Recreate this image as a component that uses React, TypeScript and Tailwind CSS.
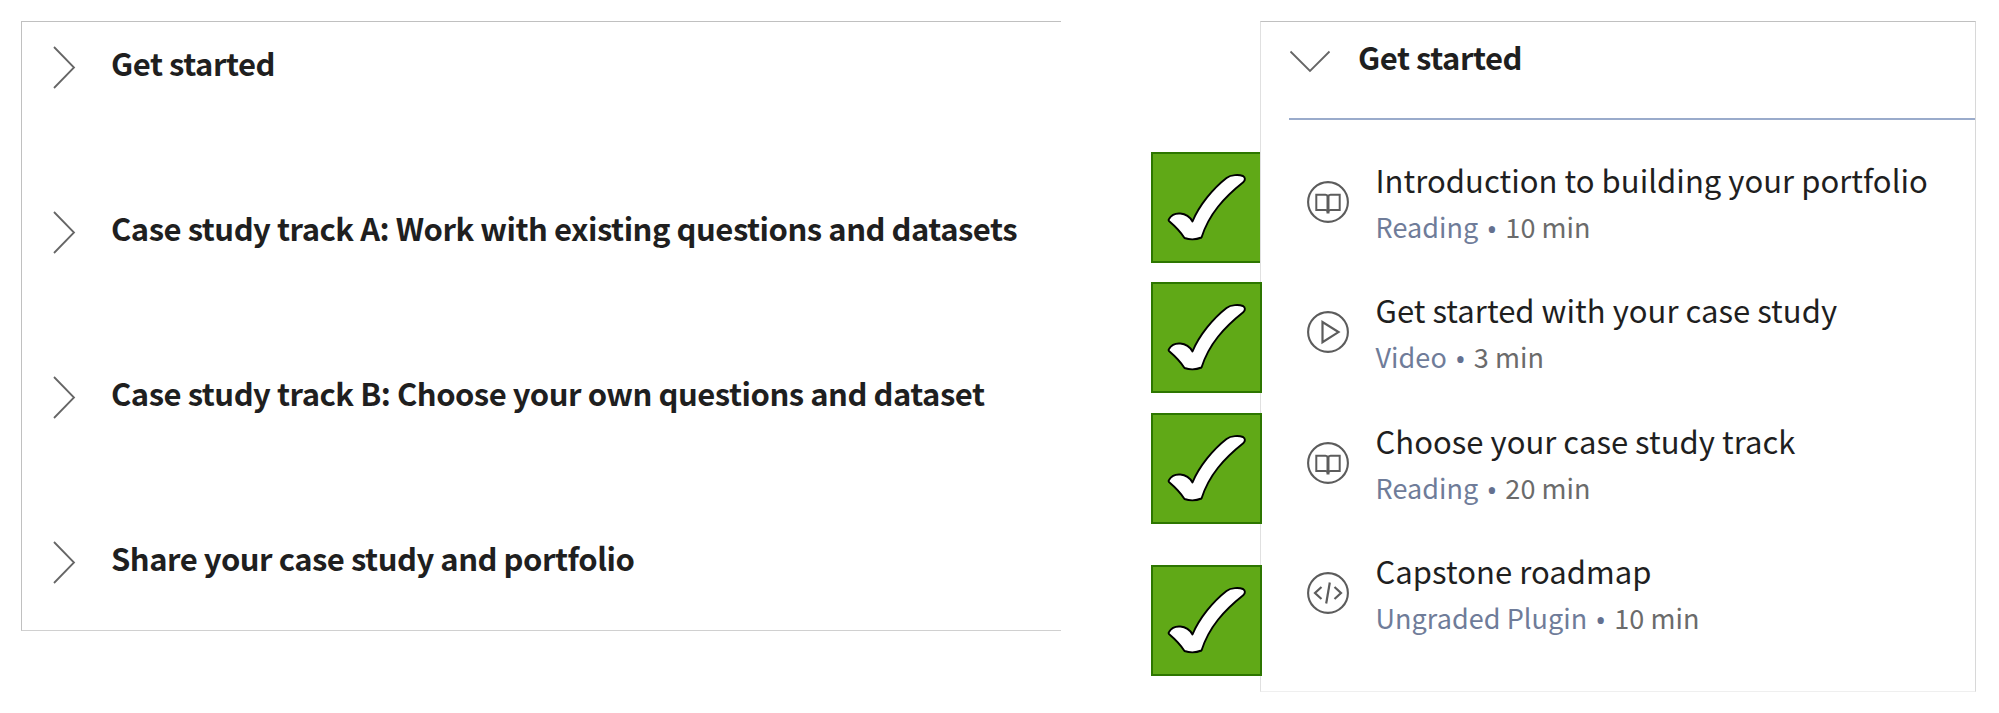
import type { ReactNode } from "react";

const modules = [
  "Get started",
  "Case study track A: Work with existing questions and datasets",
  "Case study track B: Choose your own questions and dataset",
  "Share your case study and portfolio",
];

type Kind = "reading" | "video" | "plugin";

const lessons: { title: string; kind: Kind; label: string; time: string }[] = [
  { title: "Introduction to building your portfolio", kind: "reading", label: "Reading", time: "10 min" },
  { title: "Get started with your case study", kind: "video", label: "Video", time: "3 min" },
  { title: "Choose your case study track", kind: "reading", label: "Reading", time: "20 min" },
  { title: "Capstone roadmap", kind: "plugin", label: "Ungraded Plugin", time: "10 min" },
];

const glyphs: Record<Kind, ReactNode> = {
  reading: (
    <g strokeWidth="2">
      <path d="M21 15.500Q20.500 13.700 18.500 13.700H9.300V29H18.500Q20.500 29 21 31Q21.500 29 23.500 29H32.700V13.700H23.500Q21.500 13.700 21 15.500Z" />
      <path d="M21 15V32.500" strokeWidth="3" />
    </g>
  ),
  video: <path d="M15.500 11V31.200L31.500 21.100Z" strokeWidth="2.2" />,
  plugin: (
    <g strokeWidth="2.200">
      <path d="M14.500 15L8 21L14.500 27M27.500 15L34 21L27.500 27" />
      <path d="M22.800 10.500L19.200 31.500" />
    </g>
  ),
};

function LessonIcon({ kind }: { kind: Kind }) {
  return (
    <svg viewBox="0 0 42 42" className="size-[42px] shrink-0" fill="none" stroke="#5c5c5c">
      <circle cx="21" cy="21" r="19.900" strokeWidth="2.100" />
      {glyphs[kind]}
    </svg>
  );
}

function CheckTile({ className }: { className: string }) {
  return (
    <svg viewBox="0 0 111 111" className={`size-[111px] shrink-0 ${className}`}>
      <rect x="1" y="1" width="109" height="109" fill="#60a917" stroke="#2d7600" strokeWidth="2" />
      <path
        d="M18 67C22.500 59 36 59.500 41.500 69.500C48 53.500 62 36.500 75.500 26C80 22.500 88 22.500 92 24Q95.500 26.500 92.500 30C73 45.500 58 62 50.500 85.500Q42 89 33.500 86C29 79 25 75 18.500 69.500Q17 68.500 18 67Z"
        fill="#fff"
        stroke="#000"
        strokeWidth="1.900"
        strokeLinejoin="round"
      />
    </svg>
  );
}

export default function App() {
  return (
    <main className="flex h-[713px] w-[1999px] overflow-hidden bg-white pt-[21px] pl-[21px] font-['Noto_Sans_CJK_SC',sans-serif] text-[#1f1f1f]">
      <section className="h-[610px] w-[1040px] shrink-0 border-t border-b border-l border-t-[#c0c0c0] border-b-[#d0d0d0] border-l-[#c0c0c0]">
        {modules.map((name) => (
          <div key={name} className="flex h-[165px] items-start gap-[35px] pl-[30px]">
            <svg viewBox="0 0 24 44" className="mt-[23px] h-[44px] w-6 shrink-0" fill="none" stroke="#666" strokeWidth="1.800">
              <path d="M2 2L22 22.500L2 43" />
            </svg>
            <h2 className="mt-[17px] text-[31px] leading-[48px] font-bold tracking-[-0.48px] whitespace-nowrap">{name}</h2>
          </div>
        ))}
      </section>

      <div className="-mr-[2px] ml-[90px] flex w-[111px] shrink-0 flex-col pt-[131px]">
        <CheckTile className="" />
        <CheckTile className="z-10 mt-[19px]" />
        <CheckTile className="z-10 mt-[20px]" />
        <CheckTile className="z-10 mt-[41px]" />
      </div>

      <section className="relative h-[671px] w-[716px] shrink-0 border border-t-[#c0c0c0] border-r-[#d8d8d8] border-b-[#efefef] border-l-[#e0e0e0] bg-white pl-7">
        <div className="flex h-[98px] items-start gap-[27px] border-b-2 border-[#9aabcb]">
          <svg viewBox="0 0 42 24" className="mt-[28px] h-6 w-[42px] shrink-0" fill="none" stroke="#666" strokeWidth="1.800">
            <path d="M1.500 1.500L21 21L40.500 1.500" />
          </svg>
          <h2 className="mt-[11px] text-[31px] leading-[48px] font-bold tracking-[-0.48px]">Get started</h2>
        </div>
        <ul className="pt-9">
          {lessons.map((lesson) => (
            <li key={lesson.title} className="flex h-[130.300px] items-start gap-[27px] pl-[17.500px]">
              <div className="pt-[25px]">
                <LessonIcon kind={lesson.kind} />
              </div>
              <div>
                <p className="text-[31px] leading-[47px] tracking-[0.04px] whitespace-nowrap">{lesson.title}</p>
                <p className="flex text-[27px] leading-[48px] tracking-[0.06px] whitespace-nowrap text-[#6b6b6b]">
                  <span className="text-[#6f7c99]">{lesson.label}</span>
                  <span className="w-[27px] pt-[2px] text-center font-['Open_Sans',sans-serif] text-[30px] text-[#64708f]">•</span>
                  <span>{lesson.time}</span>
                </p>
              </div>
            </li>
          ))}
        </ul>
      </section>
    </main>
  );
}
